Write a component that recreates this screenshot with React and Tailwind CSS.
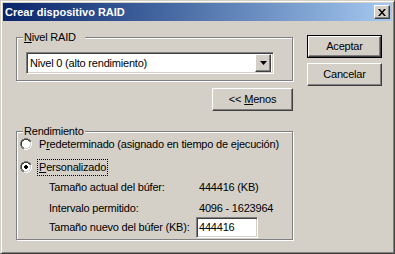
const raised =
  "border border-t-white border-l-white border-r-[#404040] border-b-[#404040] shadow-[inset_-1px_-1px_0_#808080,inset_1px_1px_0_#d4d0c8]";
const sunken =
  "border border-t-[#808080] border-l-[#808080] border-r-white border-b-white shadow-[inset_1px_1px_0_#404040,inset_-1px_-1px_0_#d4d0c8]";
const etched = "relative border border-[#808080] shadow-[inset_1px_1px_0_#fff,1px_1px_0_#fff]";

function Radio({ checked }) {
  return (
    <svg width="12" height="12" viewBox="0 0 12 12" className="shrink-0">
      <path d="M4 0h4v1h2v1h1v2h1v4h-1v2h-1v1h-2v1h-4v-1h-2v-1h-1v-2h-1v-4h1v-2h1v-1h2z" fill="#808080" />
      <path d="M12 4v4h-1v2h-1v1h-2v1h-4v-1h4v-1h2v-2h1v-4z" fill="#fff" />
      <path d="M4 1h4v1h2v1h-2v-1h-4v1h-2v2h-1v-2h1v-1h2z M1 4h1v4h-1z" fill="#404040" />
      <path d="M4 2h4v1h1v1h1v4h-1v1h-1v1h-4v-1h-1v-1h-1v-4h1v-1h1z" fill="#fff" />
      <path d="M10 4h1v4h-1v2h-2v1h-4v-1h4v-1h1v-1h1z" fill="#d4d0c8" />
      {checked && <path d="M5 4h2v1h1v2h-1v1h-2v-1h-1v-2h1z" fill="#000" />}
    </svg>
  );
}

function Button({ children, def, className = "" }) {
  const inner = (
    <div className={`${raised} flex h-full w-full items-center justify-center`}>{children}</div>
  );
  return def ? (
    <div className={`border border-black ${className}`}>{inner}</div>
  ) : (
    <div className={className}>{inner}</div>
  );
}

export default function App() {
  return (
    <div
      className="w-[395px] h-[254px] bg-[#d4d0c8] p-[2px] border border-t-[#d4d0c8] border-l-[#d4d0c8] border-r-[#404040] border-b-[#404040] shadow-[inset_1px_1px_0_#fff,inset_-1px_-1px_0_#808080] text-[11px] leading-[13px] tracking-[-0.2px] text-black"
      style={{ fontFamily: '"Liberation Sans", Arial, sans-serif' }}
    >
      <div className="flex h-[18px] items-center justify-between bg-gradient-to-r from-[#0a246a] to-[#a6caf0] pl-[2px] pr-[2px]">
        <span className="font-bold text-white text-[11px] tracking-normal">Crear dispositivo RAID</span>
        <div className={`${raised} flex h-[14px] w-[16px] items-center justify-center bg-[#d4d0c8]`}>
          <svg width="8" height="7" viewBox="0 0 8 7">
            <path d="M0 0h2l2 2.5 2-2.5h2l-3 3.5 3 3.5h-2l-2-2.5-2 2.5h-2l3-3.5z" fill="#000" />
          </svg>
        </div>
      </div>

      <div className="flex pt-[16px] pl-[13px]">
        <div className="flex w-[277px] flex-col">
          <div className={`${etched} h-[44px] pt-[14px] pl-[9px]`}>
            <span className="absolute -top-[7px] left-[6px] bg-[#d4d0c8] pl-[1px] pr-[9px]">
              <span className="underline">N</span>ivel RAID
            </span>
            <div className={`${sunken} flex h-[22px] w-[248px] items-center bg-white pl-[3px] pr-[2px]`}>
              <span className="flex-1">Nivel 0 (alto rendimiento)</span>
              <div className={`${raised} flex h-[18px] w-[16px] items-center justify-center bg-[#d4d0c8]`}>
                <svg width="7" height="4" viewBox="0 0 7 4">
                  <path d="M0 0h7l-3.5 4z" fill="#000" />
                </svg>
              </div>
            </div>
          </div>

          <div className="mt-[7px] flex justify-end">
            <Button className="h-[23px] w-[81px]">
              &lt;&lt; <span className="ml-[3px] underline">M</span>enos
            </Button>
          </div>

          <div className={`${etched} mt-[20px] h-[109px] pt-[4px]`}>
            <span className="absolute -top-[7px] left-[6px] bg-[#d4d0c8] px-[1px]">Rendimiento</span>
            <div className="flex h-[16px] items-center gap-[5px] pl-[3px]">
              <Radio />
              <span className="border border-transparent px-[1px]">
                P<span className="underline">r</span>edeterminado (asignado en tiempo de ejecución)
              </span>
            </div>
            <div className="mt-[7px] flex h-[16px] items-center gap-[5px] pl-[3px]">
              <Radio checked />
              <span className="border border-dotted border-black px-[1px] py-[1px]">
                <span className="underline">P</span>ersonalizado
              </span>
            </div>
            <div className="mt-[4px] flex h-[16px] items-center pl-[32px]">
              <span className="w-[147px]">Tamaño actual del búfer:</span>
              <span className="pl-[3px]">444416 (KB)</span>
            </div>
            <div className="mt-[5px] flex h-[16px] items-center pl-[32px]">
              <span className="w-[147px]">Intervalo permitido:</span>
              <span className="pl-[3px]">4096 - 1623964</span>
            </div>
            <div className="mt-[1px] flex h-[21px] items-center pl-[32px]">
              <span className="w-[147px]">Tamaño nuevo del búfer (KB):</span>
              <div className={`${sunken} flex h-[21px] w-[62px] items-center bg-white pl-[2px]`}>444416</div>
            </div>
          </div>
        </div>

        <div className="ml-[14px] flex flex-col">
          <Button def className="-mt-[2px] h-[23px] w-[75px]">Aceptar</Button>
          <Button className="mt-[5px] h-[23px] w-[75px]">Cancelar</Button>
        </div>
      </div>
    </div>
  );
}
